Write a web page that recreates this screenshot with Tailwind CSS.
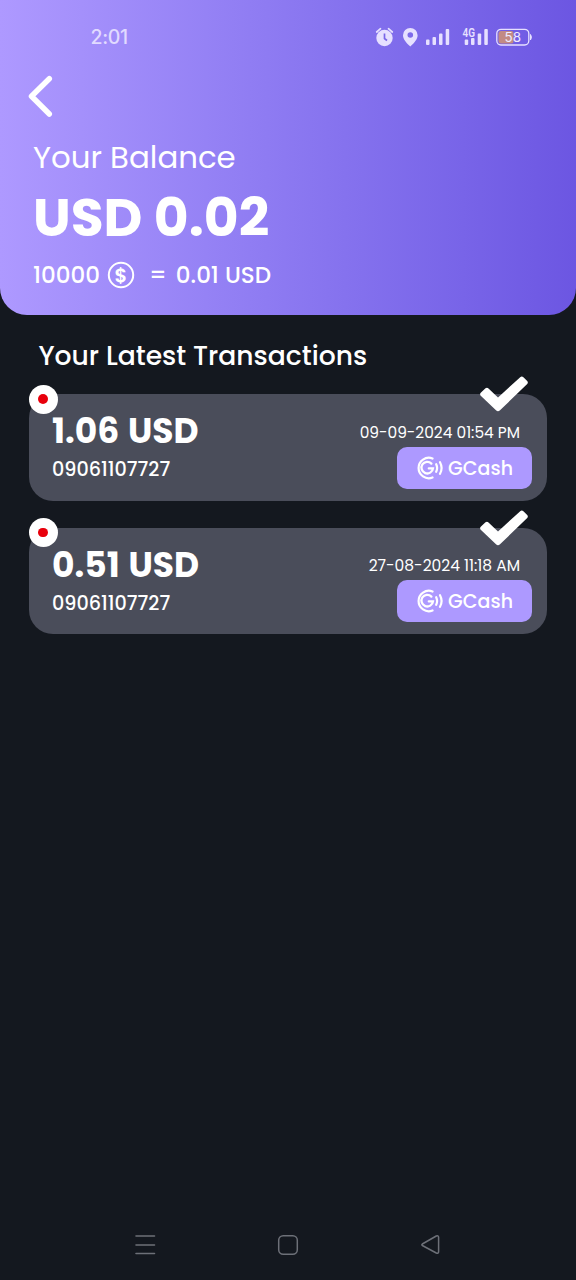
<!DOCTYPE html>
<html lang="en">
<head>
<meta charset="utf-8">
<meta name="viewport" content="width=device-width, initial-scale=1">
<title>Your Balance</title>
<script src="https://cdn.jsdelivr.net/npm/@tailwindcss/browser@4"></script>
</head>
<body class="bg-[#14181f] text-white font-['Poppins','Inter',sans-serif] w-[576px] h-[1280px] overflow-hidden flex flex-col whitespace-nowrap">

<svg class="hidden">
  <symbol id="check" viewBox="0 0 48 36"><path fill="#fff" d="M1 16.500 5.500 12.200Q7 11 8.500 12.400L18 21.500 40.200 1.200Q41.800-.3 43.400 1.200L47.200 5Q48.500 6.500 47.200 8L20 34.300Q18 36 16 34.300L1 20Q-.8 18.200 1 16.500Z"/></symbol>
  <symbol id="gcash" viewBox="0 0 27 24"><g fill="none" stroke="#fff" stroke-linecap="round"><path stroke-width="2.200" d="M16.500 2.500A10.200 10.200 0 1 0 16.500 21.500"/><path stroke-width="2.300" d="M15.400 7.600A5.800 5.800 0 1 0 17 12.400H12.800"/><path stroke-width="2.200" d="M20.200 8.200Q22 12 20.200 15.800M24 6.200Q27.200 12 24 17.800"/></g></symbol>
</svg>

<header class="h-[315px] shrink-0 rounded-b-[27px] bg-gradient-to-r from-[#ae99ff] to-[#6c56e2] flex flex-col">
  <div class="h-[73px] pl-[90.500px] pr-[44px] flex items-center justify-between text-[#e1daff]">
    <span class="font-[Inter] text-[19.500px] leading-6 font-medium tracking-[-0.3px]">2:01</span>
    <svg class="w-[158px] h-[24px]" viewBox="374 25 158 24">
      <g fill="#e6e0ff">
        <circle cx="384.500" cy="38" r="8.200"/>
        <path d="M384.500 33.500V38.500L387 40.500" fill="none" stroke="#7967e8" stroke-width="1.700"/>
        <path d="M376.700 32 380.500 28.700M392.300 32 388.500 28.700" fill="none" stroke="#e6e0ff" stroke-width="1.700" stroke-linecap="round"/>
        <path fill-rule="evenodd" d="M410.300 46.500C406 42.500 403 39 403 35.200A7.300 7.300 0 0 1 417.600 35.200C417.600 39 414.600 42.500 410.300 46.500ZM410.300 32.200A2.800 2.800 0 1 0 410.300 37.800 2.800 2.800 0 0 0 410.300 32.200Z"/>
        <rect x="426" y="39.500" width="3.500" height="5.500" rx="1"/><rect x="432.500" y="37" width="3.500" height="8" rx="1"/><rect x="439" y="33.500" width="3.500" height="11.500" rx="1"/><rect x="445.700" y="29" width="3.500" height="16" rx="1"/>
        <rect x="464.700" y="39.500" width="3.500" height="5.500" rx="1"/><rect x="471" y="38" width="3.500" height="7" rx="1"/><rect x="477.700" y="33.500" width="3.500" height="11.500" rx="1"/><rect x="484.300" y="29" width="3.500" height="16" rx="1"/>
        <text x="462.500" y="36.500" font-size="12" font-weight="600" textLength="12.500" lengthAdjust="spacingAndGlyphs" font-family="Roboto">4G</text>
      </g>
      <rect x="498.500" y="31" width="15" height="12.500" rx="2.500" fill="#c28a84"/>
      <rect x="496.800" y="29.300" width="32" height="15.700" rx="4.200" fill="none" stroke="#e6e0ff" stroke-width="1.300"/>
      <path d="M530.500 34.500Q532.300 37 530.500 40Z" fill="#e6e0ff" stroke="#e6e0ff"/>
      <text x="504.500" y="42" font-size="13" textLength="16.500" lengthAdjust="spacingAndGlyphs" fill="#efeaff" font-family="Inter">58</text>
    </svg>
  </div>
  <svg class="ml-[26px] w-[30px] h-[46px]" viewBox="26 73 30 46"><path d="M49.300 78.700 31.500 96.200 49.300 114" fill="none" stroke="#fff" stroke-width="5.500" stroke-linecap="round" stroke-linejoin="round"/></svg>
  <div class="flex flex-col items-start pl-[33px] pt-[21px]">
    <span class="text-[30.800px] leading-9 font-normal">Your Balance</span>
    <span class="mt-[12px] text-[53.500px] leading-[60px] font-bold">USD 0.02</span>
    <div class="mt-[11px] flex items-center text-[23px] leading-[32px] font-medium">
      <span>10000</span>
      <svg class="ml-[7px] w-[28px] h-[28px]" viewBox="0 0 28 28"><circle cx="14" cy="14" r="12.200" fill="none" stroke="#fff" stroke-width="2"/><text x="14" y="20.500" font-size="19.500" font-weight="600" text-anchor="middle" fill="#fff">$</text></svg>
      <span class="ml-[14px]">=</span>
      <span class="ml-[9px]">0.01 USD</span>
    </div>
  </div>
</header>

<main class="flex-1 px-[29px]">
  <h1 class="pl-[9.500px] mt-[25px] text-[26.600px] leading-8 font-medium">Your Latest Transactions</h1>

  <section class="relative mt-[22px] h-[106.500px] rounded-[24px] bg-[#4a4d5a] pl-[23px] pr-[15px] flex justify-between">
    <span class="absolute -left-[0.500px] -top-[9.500px] size-[29px] rounded-full bg-white flex items-center justify-center"><i class="size-[9.500px] rounded-full bg-[#e8000c]"></i></span>
    <svg class="absolute left-[451px] -top-[18px] w-[48px] h-[36px]"><use href="#check"/></svg>
    <div class="pt-[17px] flex flex-col items-start">
      <span class="text-[34.500px] leading-10 font-bold [word-spacing:1.5px]">1.06 USD</span>
      <span class="mt-[7px] text-[19.200px] leading-6 font-medium">09061107727</span>
    </div>
    <div class="pt-[29px] flex flex-col items-end">
      <span class="mr-[12px] text-[15.400px] leading-5">09-09-2024 01:54 PM</span>
      <div class="mt-[4px] w-[135px] h-[42px] rounded-[10px] bg-[#ad99ff] pl-[19px] flex items-center">
        <svg class="w-[27px] h-[24px]"><use href="#gcash"/></svg>
        <span class="ml-[5px] pt-px text-[19px] leading-6 font-medium tracking-[0.1px]">GCash</span>
      </div>
    </div>
  </section>

  <section class="relative mt-[27px] h-[106.500px] rounded-[24px] bg-[#4a4d5a] pl-[23px] pr-[15px] flex justify-between">
    <span class="absolute -left-[0.500px] -top-[9.500px] size-[29px] rounded-full bg-white flex items-center justify-center"><i class="size-[9.500px] rounded-full bg-[#e8000c]"></i></span>
    <svg class="absolute left-[451px] -top-[18px] w-[48px] h-[36px]"><use href="#check"/></svg>
    <div class="pt-[17px] flex flex-col items-start">
      <span class="text-[34.500px] leading-10 font-bold [word-spacing:1.5px]">0.51 USD</span>
      <span class="mt-[7px] text-[19.200px] leading-6 font-medium">09061107727</span>
    </div>
    <div class="pt-[28.500px] flex flex-col items-end">
      <span class="mr-[12px] text-[15.500px] leading-5">27-08-2024 11:18 AM</span>
      <div class="mt-[4px] w-[135px] h-[42px] rounded-[10px] bg-[#ad99ff] pl-[19px] flex items-center">
        <svg class="w-[27px] h-[24px]"><use href="#gcash"/></svg>
        <span class="ml-[5px] pt-px text-[19px] leading-6 font-medium tracking-[0.1px]">GCash</span>
      </div>
    </div>
  </section>
</main>

<nav class="h-[70px] px-[134px] flex items-center justify-between text-[#6d7078]">
  <svg class="w-[22px] h-[22px]" fill="none" stroke="currentColor" stroke-width="1.600" stroke-linecap="round"><path d="M2 2H20.500M2 11H20.500M2 19.500H20.500"/></svg>
  <svg class="w-[22px] h-[22px]" fill="none" stroke="currentColor" stroke-width="1.500"><rect x="1.700" y="1.700" width="18.600" height="18.600" rx="4.500"/></svg>
  <svg class="w-[22px] h-[22px]" fill="none" stroke="currentColor" stroke-width="1.500" stroke-linejoin="round"><path d="M2.300 10 16.300 2Q18.300 1.200 18.600 3.200V17.800Q18.300 19.800 16.300 19L2.300 11.500Q1.300 10.800 2.300 10Z"/></svg>
</nav>
</body>
</html>
